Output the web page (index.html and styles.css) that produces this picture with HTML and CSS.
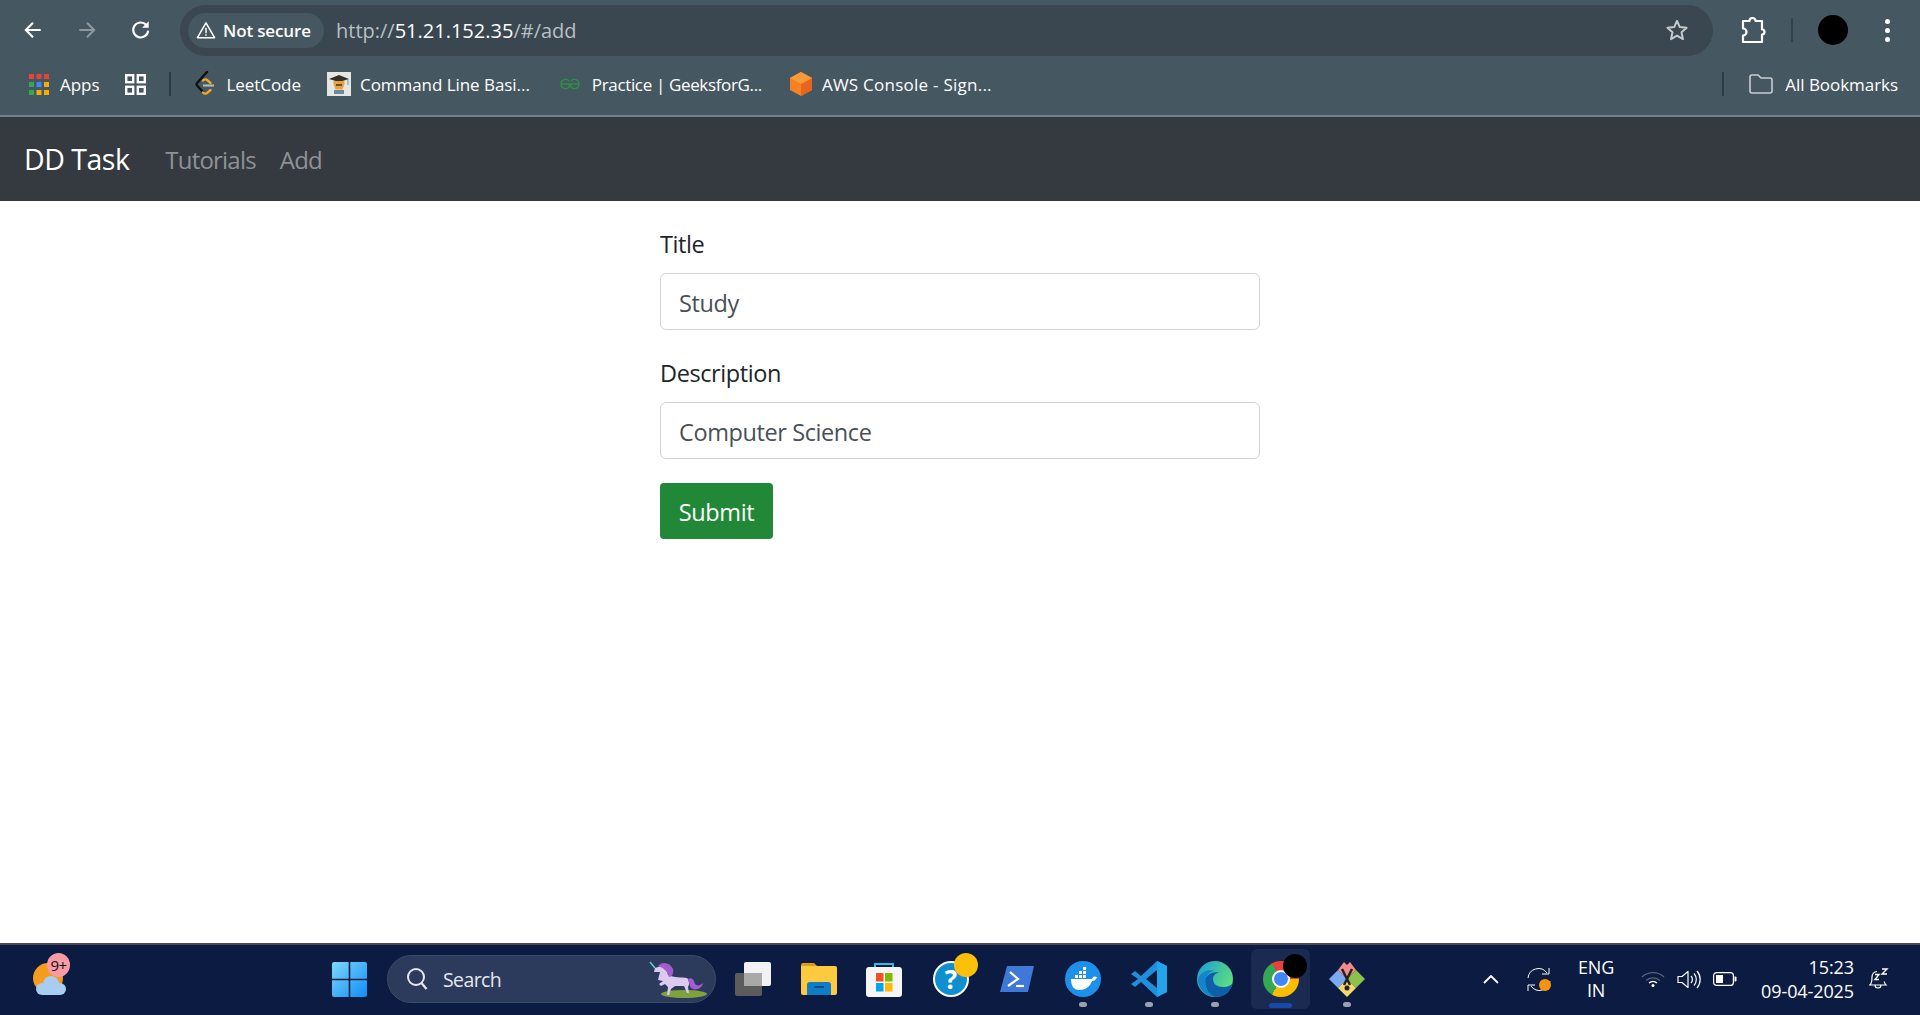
FILE: index.html
```html
<!DOCTYPE html>
<html lang="en">
<head>
    <meta charset="UTF-8">
    <title>DD Task</title>
    <link rel="stylesheet" href="styles.css">
</head>
<body>
    <div class="toolbar">
        <svg class="tool-icon back" viewBox="0 0 20 20"><path d="M17 10H4M10 3.5 3.5 10l6.5 6.5" fill="none" stroke="#fff" stroke-width="1.9"/></svg>
        <svg class="tool-icon forward" viewBox="0 0 20 20"><path d="M3 10h13M10 3.5l6.5 6.5-6.5 6.5" fill="none" stroke="#8d999f" stroke-width="1.9"/></svg>
        <svg class="tool-icon reload" viewBox="0 0 20 20"><path d="M16.5 10.5a6.8 6.8 0 1 1-1.800-5.200" fill="none" stroke="#fff" stroke-width="1.900"/><path d="M17 2v6h-6z" fill="#fff"/></svg>
        <div class="omnibox">
            <div class="chip">
                <svg class="warn" viewBox="0 0 22 20"><path d="M11 2 1.500 18.500h19z" fill="none" stroke="#fff" stroke-width="1.700" stroke-linejoin="round"/><path d="M11 7.500v6M11 14.700v1.800" stroke="#fff" stroke-width="1.600"/></svg>
                <span class="chip-text">Not secure</span>
            </div>
            <div class="url"><span class="url-dim">http://</span>51.21.152.35<span class="url-dim">/#/add</span></div>
            <svg class="star" viewBox="0 0 24 24"><path d="m12 2.800 2.800 6.300 6.800.7-5.100 4.500 1.500 6.800-6-3.500-6 3.500 1.500-6.800-5.100-4.500 6.800-.7z" fill="none" stroke="#c3c9cc" stroke-width="2" stroke-linejoin="round"/></svg>
        </div>
        <svg class="ext" viewBox="0 0 26 30"><path d="M3 6h6.500a3 3 0 0 1 6 0H22v8.500a2.500 2.500 0 0 1 0 5V27H3v-6.500a3.500 3.500 0 0 0 0-7z" fill="none" stroke="#fff" stroke-width="2.200" stroke-linejoin="round"/></svg>
        <div class="tool-sep"></div>
        <div class="avatar"></div>
        <div class="dots"><i></i><i></i><i></i></div>
    </div>

    <div class="bookmarks">
        <svg class="bm-apps" viewBox="0 0 20 21">
            <g fill="#ea4335"><rect width="5" height="5"/><rect x="7.500" width="5" height="5"/><rect x="15" width="5" height="5"/></g>
            <rect y="8" width="5" height="5" fill="#34a853"/><rect x="7.500" y="8" width="5" height="5" fill="#4285f4"/><rect x="15" y="8" width="5" height="5" fill="#f9ab00"/>
            <rect y="16" width="5" height="5" fill="#34a853"/><rect x="7.500" y="16" width="5" height="5" fill="#f9ab00"/><rect x="15" y="16" width="5" height="5" fill="#f9ab00"/>
        </svg>
        <span class="bm-text apps-label">Apps</span>
        <svg class="bm-grid" viewBox="0 0 21 21"><g fill="none" stroke="#fff" stroke-width="2.400"><rect x="1.200" y="1.200" width="7" height="7"/><rect x="12.800" y="1.200" width="7" height="7"/><rect x="1.200" y="12.800" width="7" height="7"/><rect x="12.800" y="12.800" width="7" height="7"/></g></svg>
        <div class="bm-sep first-sep"></div>
        <svg class="bm-leet" viewBox="0 0 20 26"><path d="M12 1 2.500 11.500a2.500 2.500 0 0 0 0 3.500L8 21" fill="none" stroke="#111" stroke-width="2.400" stroke-linecap="round"/><path d="M8 21.500a3 3 0 0 0 4.500.2l3-2.700M8 9.500a3 3 0 0 1 4.500-.2l3 2.700" fill="none" stroke="#f5a623" stroke-width="2.400" stroke-linecap="round"/><path d="M8 14.500h11" stroke="#b3b8ba" stroke-width="2.200"/></svg>
        <span class="bm-text leet-label">LeetCode</span>
        <svg class="bm-cmd" viewBox="0 0 24 24"><rect width="24" height="24" fill="#e6e6e3"/><path d="M2 7l10-4 10 4-10 3z" fill="#33302c"/><path d="M6.500 9h11v3l-2 5.500h-7l-2-5.500z" fill="#e8a33c"/><path d="M9 12h6v2H9z" fill="#7a4e1c"/><path d="M7 18h10v4H7z" fill="#6d8ba0"/><path d="M21 7v6" stroke="#4a9dbd"/></svg>
        <span class="bm-text cmd-label">Command Line Basi...</span>
        <svg class="bm-gfg" viewBox="0 0 22 12"><path d="M1.500 6h19M2 6a4.500 4.500 0 0 1 8-3M2 6a4.500 4.500 0 0 0 8 3l.5-3M20 6a4.500 4.500 0 0 0-8-3M20 6a4.500 4.500 0 0 1-8 3l-.5-3" fill="none" stroke="#2f8d46" stroke-width="1.400"/></svg>
        <span class="bm-text gfg-label">Practice | GeeksforG...</span>
        <svg class="bm-aws" viewBox="0 0 22 24"><path d="M11 0l11 6v12l-11 6L0 18V6z" fill="#f58220"/><path d="M11 12l11-6v12l-11 6z" fill="#e8631c"/><path d="M11 0l11 6-11 6L0 6z" fill="#f9993b"/></svg>
        <span class="bm-text aws-label">AWS Console - Sign...</span>
        <div class="bm-spacer"></div>
        <div class="bm-sep"></div>
        <svg class="bm-folder" viewBox="0 0 24 20"><path d="M1 3a2 2 0 0 1 2-2h6l3 3h9a2 2 0 0 1 2 2v11a2 2 0 0 1-2 2H3a2 2 0 0 1-2-2z" fill="none" stroke="#c9ced1" stroke-width="1.600"/></svg>
        <span class="bm-text all-label">All Bookmarks</span>
    </div>

    <nav class="navbar">
        <span class="brand">DD Task</span>
        <a class="nav-link">Tutorials</a>
        <a class="nav-link">Add</a>
    </nav>

    <main class="page">
        <form class="task-form">
            <div class="form-group">
                <label class="form-label">Title</label>
                <div class="form-control">Study</div>
            </div>
            <div class="form-group">
                <label class="form-label">Description</label>
                <div class="form-control">Computer Science</div>
            </div>
            <div class="btn-submit">Submit</div>
        </form>
    </main>

    <footer class="taskbar">
        <div class="widget">
            <svg class="weather" viewBox="0 0 33 32">
                <ellipse cx="15" cy="15" rx="15" ry="15" fill="#f39c1f"/>
                <g fill="#a8cdf0"><circle cx="9" cy="26" r="6"/><circle cx="27" cy="26" r="6"/><circle cx="18" cy="21" r="8"/><rect x="9" y="22" width="18" height="10"/></g>
            </svg>
            <span class="badge">9+</span>
        </div>

        <div class="tb-center">
            <svg class="win-logo" viewBox="0 0 35 35">
                <defs><linearGradient id="wing" x1="0" y1="0" x2="1" y2="1"><stop offset="0" stop-color="#7fd8fb"/><stop offset="1" stop-color="#0f8cf5"/></linearGradient></defs>
                <path d="M0 2a2 2 0 0 1 2-2h14.700v16.700H0zM18.300 0H33a2 2 0 0 1 2 2v14.700H18.300zM0 18.300h16.700V35H2a2 2 0 0 1-2-2zM18.300 18.300H35V33a2 2 0 0 1-2 2H18.300z" fill="url(#wing)"/>
            </svg>
            <div class="search-pill">
                <svg class="search-icon" viewBox="0 0 22 24"><circle cx="10" cy="10" r="8" fill="none" stroke="#e4e7ee" stroke-width="2"/><path d="m15.500 16 5 6" stroke="#e4e7ee" stroke-width="2.200"/></svg>
                <span class="search-text">Search</span>
                <svg class="unicorn" viewBox="0 0 61 37">
                    <ellipse cx="38" cy="33" rx="23" ry="4" fill="#7fa23c"/>
                    <path d="M4 1l5 6" stroke="#5fd0d8" stroke-width="1.500"/>
                    <path d="M12 19l2-8-6 0 1-4 6-2c6 0 6 5 7 9 6 3 14 2 19 3 2 2 3 6 1 9l1 6h-2l-3-7-9 0-4 3-2 6h-2l1-8-3-3-4 2-2-2 4-3z" fill="#dcc9ee"/>
                    <path d="M12 5c4-5 12-4 15 3 1 4-1 8-4 8-1-5-5-9-11-11zM42 18c4-2 6 1 7 5 2 2 5 2 8-1-1 6-8 8-12 5-2-3-2-6-3-9z" fill="#a35cd0"/>
                </svg>
            </div>
            <svg class="taskview" viewBox="0 0 36 34">
                <rect y="11" width="27" height="23" rx="2" fill="#5c5c5c"/>
                <rect x="9" width="27" height="24" rx="2" fill="#f2f2f2"/>
                <rect x="9" y="11" width="18" height="13" fill="#a9a9a9"/>
            </svg>
            <svg class="explorer" viewBox="0 0 36 32">
                <path d="M0 2a2 2 0 0 1 2-2h11l3 3H0z" fill="#d69f16"/>
                <path d="M0 3h34a2 2 0 0 1 2 2v25a2 2 0 0 1-2 2H2a2 2 0 0 1-2-2z" fill="#fdc93f"/>
                <path d="M6 32V22a3 3 0 0 1 3-3h18a3 3 0 0 1 3 3v10z" fill="#0f7cc6"/>
                <path d="M13 24h10" stroke="#0a4f8a" stroke-width="2"/>
            </svg>
            <svg class="store" viewBox="0 0 36 35">
                <path d="M9 8V2h18v6" fill="none" stroke="#35b6e8" stroke-width="2"/>
                <rect y="5" width="36" height="30" rx="3" fill="#f5f5f5"/>
                <rect x="10" y="11" width="7.500" height="8.500" fill="#f25022"/><rect x="19" y="11" width="7.500" height="8.500" fill="#7fba00"/>
                <rect x="10" y="21" width="7.500" height="8.500" fill="#00a4ef"/><rect x="19" y="21" width="7.500" height="8.500" fill="#ffb900"/>
            </svg>
            <div class="help-app">
                <span class="help-circle">?</span>
                <span class="help-dot"></span>
            </div>
            <svg class="powershell" viewBox="0 0 34 26">
                <path d="M7 0h27l-6 26H0z" fill="#3f78d6"/>
                <path d="m10 6 8 7-10 7" fill="none" stroke="#fff" stroke-width="2.200"/>
                <path d="M16 20h8" stroke="#fff" stroke-width="2.200"/>
            </svg>
            <div class="pinned first-pinned">
                <svg class="app-36" viewBox="0 0 36 36">
                    <circle cx="18" cy="18" r="18" fill="#1d91ea"/>
                    <path d="M6 18h21c1-3 3-3 5-2-1 3-3 4-5 4-2 6-7 9-13 9-5 0-8-4-8-11z" fill="#fff"/>
                    <g fill="#fff"><rect x="10" y="14" width="3" height="3"/><rect x="14" y="14" width="3" height="3"/><rect x="18" y="14" width="3" height="3"/><rect x="14" y="10" width="3" height="3"/><rect x="18" y="10" width="3" height="3"/><rect x="18" y="6" width="3" height="3"/></g>
                </svg>
                <span class="run-dot"></span>
            </div>
            <div class="pinned">
                <svg class="app-36" viewBox="0 0 36 36">
                    <path d="M26 0l10 5v26l-10 5-16-15-6 5-4-3 7-5-7-5 4-3 6 5z" fill="#1f8fdc"/>
                    <path d="M26 9v18l-11-9z" fill="#0c1b41"/>
                    <path d="M26 0l10 5v26l-10 5V27V9z" fill="#23a3ea"/>
                </svg>
                <span class="run-dot"></span>
            </div>
            <div class="pinned">
                <svg class="app-36" viewBox="0 0 36 36">
                    <defs><linearGradient id="edgeg" x1="0" y1="0" x2="1" y2="0.600"><stop offset="0" stop-color="#1a9bd8"/><stop offset="1" stop-color="#5fe07a"/></linearGradient></defs>
                    <circle cx="18" cy="18" r="18" fill="url(#edgeg)"/>
                    <path d="M36 20c0 4-5 6-10 6-6 0-10-3-10-8 0-4 4-7 8-6-8-3-17 2-17 11 0 7 6 13 13 13 9 0 15-7 16-16z" fill="#0e5fa8"/>
                    <path d="M18 36C9 36 1 28 1 18 4 10 12 8 18 10c-6 0-11 6-9 14 1 6 5 10 9 12z" fill="#1484cc"/>
                </svg>
                <span class="run-dot"></span>
            </div>
            <div class="pinned active">
                <div class="chrome-logo"><span class="chrome-eye"></span></div>
                <span class="chrome-blot"></span>
                <span class="active-bar"></span>
            </div>
            <div class="pinned">
                <svg class="app-36" viewBox="0 0 36 36">
                    <path d="M18 18 9 9 0 18l9 9z" fill="#7aa9f5"/>
                    <path d="M18 18l9-9 9 9-9 9z" fill="#8bc34a"/>
                    <path d="M18 18l9 9-9 9-9-9z" fill="#f5d76e"/>
                    <path d="M18 18 9 9l6-8 3 3 3-3 6 8z" fill="#f28b8b"/>
                    <path d="M13 8l8 16M23 8l-8 16" stroke="#222" stroke-width="2.500"/>
                    <circle cx="18" cy="27" r="2.500" fill="#222"/>
                </svg>
                <span class="run-dot"></span>
            </div>
        </div>

        <div class="tray">
            <svg class="tray-chevron" viewBox="0 0 16 9"><path d="M1 8l7-7 7 7" fill="none" stroke="#fff" stroke-width="1.800"/></svg>
            <svg class="tray-sync" viewBox="0 0 24 25">
                <path d="M1 11A10.500 10.500 0 0 1 20 6M23 14a10.500 10.500 0 0 1-19 5" fill="none" stroke="#fff" stroke-width="1"/>
                <path d="M15 7h7V1M1 18h7M1 18v6" fill="none" stroke="#fff" stroke-width="1"/>
                <circle cx="18" cy="18" r="6" fill="#f7940f"/>
            </svg>
            <div class="lang"><span>ENG</span><span>IN</span></div>
            <svg class="tray-wifi" viewBox="0 0 24 16">
                <path d="M1 6a16 16 0 0 1 22 0M5 9.500a10.500 10.500 0 0 1 14 0" fill="none" stroke="#59647d" stroke-width="1.300"/>
                <path d="M8 12a6 6 0 0 1 8 0" fill="none" stroke="#fff" stroke-width="1.500"/>
                <circle cx="12" cy="14.500" r="1.500" fill="#fff"/>
            </svg>
            <svg class="tray-sound" viewBox="0 0 24 19">
                <path d="M1 6.500h4L11 1.500v16l-6-5H1z" fill="none" stroke="#fff" stroke-width="1.200" stroke-linejoin="round"/>
                <path d="M14 6a5 5 0 0 1 0 7M17 3.500a9 9 0 0 1 0 12M20 1a13 13 0 0 1 0 17" fill="none" stroke="#fff" stroke-width="1.200"/>
            </svg>
            <svg class="tray-battery" viewBox="0 0 24 14">
                <rect x=".6" y=".6" width="19.800" height="12.800" rx="3" fill="none" stroke="#fff" stroke-width="1.200"/>
                <rect x="3" y="3" width="7" height="8" fill="#fff"/>
                <path d="M21.500 4.500h1a1 1 0 0 1 1 1v3a1 1 0 0 1-1 1h-1z" fill="#fff"/>
            </svg>
            <div class="clock"><span>15:23</span><span>09-04-2025</span></div>
            <div class="bell-wrap">
                <svg class="tray-bell" viewBox="0 0 21 22">
                    <path d="M2 17c2-2 2-4 2-8a5.500 5.500 0 0 1 5-5.500M1 17h17c-1-1-1.500-2-1.800-3.500M7 17a3 3 0 0 0 6 0" fill="none" stroke="#fff" stroke-width="1.200"/>
                    <path d="M7 6.500h4l-4 5h4M14 1h5l-5 5h5" fill="none" stroke="#fff" stroke-width="1.400"/>
                </svg>
            </div>
        </div>
    </footer>
</body>
</html>
```

FILE: styles.css
```css
* {
    box-sizing: border-box;
}

html, body {
    margin: 0;
    height: 100%;
}

body {
    display: flex;
    flex-direction: column;
    height: 1015px;
    overflow: hidden;
    background-color: #fff;
    font-family: "Open Sans", "Noto Sans", sans-serif;
}

svg {
    display: block;
    flex: none;
}

/* browser toolbar */
.toolbar {
    display: flex;
    align-items: center;
    height: 58px;
    padding-top: 2px;
    background-color: #455761;
}

.tool-icon {
    width: 22px;
    height: 22px;
}
.back { margin-left: 22px; }
.forward { margin-left: 32px; }
.reload { margin-left: 32px; }

.omnibox {
    display: flex;
    align-items: center;
    width: 1533px;
    height: 51px;
    margin-left: 28px;
    padding-left: 8px;
    border-radius: 26px;
    background-color: #3a4750;
}

.chip {
    display: flex;
    align-items: center;
    width: 136px;
    height: 35px;
    padding-left: 8px;
    border-radius: 18px;
    background-color: #455761;
}

.warn {
    width: 20px;
    height: 18px;
}

.chip-text {
    margin-left: 7px;
    color: #fff;
    font-size: 17px;
    font-weight: 600;
    letter-spacing: -0.15px;
    white-space: nowrap;
}

.url {
    margin-left: 12px;
    color: #fff;
    font-size: 20px;
    white-space: nowrap;
}
.url-dim { color: #b7bfc3; }

.star {
    width: 24px;
    height: 24px;
    margin-left: auto;
    margin-right: 24px;
}

.ext {
    width: 26px;
    height: 30px;
    margin-left: 27px;
}

.tool-sep {
    width: 2px;
    height: 24px;
    margin-left: 25px;
    background-color: #37424a;
}

.avatar {
    width: 30px;
    height: 30px;
    margin-left: 25px;
    border-radius: 50%;
    background-color: #000;
}

.dots {
    display: flex;
    flex-direction: column;
    gap: 4px;
    margin-left: 37px;
}
.dots i {
    width: 5px;
    height: 5px;
    border-radius: 50%;
    background-color: #fff;
}

/* bookmarks bar */
.bookmarks {
    display: flex;
    align-items: center;
    height: 59px;
    padding-bottom: 5px;
    padding-right: 22px;
    border-bottom: 2px solid #6f828b;
    background-color: #455761;
}

.bm-text {
    color: #fff;
    font-size: 17px;
    letter-spacing: -0.05px;
    white-space: nowrap;
}

.bm-apps { width: 20px; height: 21px; margin-left: 29px; }
.apps-label { margin-left: 11px; }
.bm-grid { width: 21px; height: 21px; margin-left: 26px; }
.bm-sep { width: 2px; height: 24px; background-color: #2e3a41; }
.first-sep { margin-left: 23px; }
.bm-leet { width: 20px; height: 26px; margin-left: 24px; }
.leet-label { margin-left: 11px; }
.bm-cmd { width: 24px; height: 24px; margin-left: 26px; }
.cmd-label { margin-left: 9px; }
.bm-gfg { width: 22px; height: 12px; margin-left: 29px; }
.gfg-label { margin-left: 11px; letter-spacing: -0.35px; }
.bm-aws { width: 22px; height: 24px; margin-left: 28px; }
.aws-label { margin-left: 10px; letter-spacing: 0.25px; }
.bm-spacer { flex: 1; }
.bm-folder { width: 24px; height: 20px; margin-left: 25px; }
.all-label { margin-left: 12px; }

/* app navbar */
.navbar {
    display: flex;
    align-items: center;
    flex: none;
    height: 84px;
    padding: 0 24px;
    background-color: #343a40;
}

.brand {
    margin-right: 36px;
    color: #fff;
    font-size: 28.500px;
    letter-spacing: -0.5px;
}

.nav-link {
    margin-right: 24px;
    color: #8f9295;
    font-size: 24px;
    letter-spacing: -0.8px;
}

/* form */
.page {
    flex: 1;
    padding-top: 24px;
}

.task-form {
    width: 600px;
    margin: 0 auto;
}

.form-group {
    margin-bottom: 24px;
}

.form-label {
    display: block;
    margin-bottom: 12px;
    padding-top: 1px;
    height: 36px;
    color: #212529;
    font-size: 23.500px;
    line-height: 36px;
    letter-spacing: -0.4px;
}

.form-control {
    height: 57px;
    padding: 11px 18px 0;
    border: 1.500px solid #ced4da;
    border-radius: 6px;
    color: #495057;
    font-size: 23.500px;
    line-height: 36px;
    letter-spacing: -0.4px;
}

.btn-submit {
    width: 113px;
    height: 56px;
    border-radius: 4px;
    background-color: #218838;
    color: #fff;
    font-size: 23.500px;
    line-height: 58px;
    text-align: center;
    letter-spacing: -0.4px;
}

/* windows taskbar */
.taskbar {
    display: flex;
    align-items: center;
    flex: none;
    height: 72px;
    padding-bottom: 2px;
    border-top: 2px solid #474a52;
    background-color: #0c1b41;
}

.widget {
    position: relative;
    width: 33px;
    height: 32px;
    margin-left: 33px;
}

.weather {
    width: 33px;
    height: 32px;
}

.badge {
    position: absolute;
    top: -10px;
    left: 14px;
    width: 23px;
    height: 24px;
    border-radius: 50%;
    background-color: #f99ba4;
    color: #111;
    font-size: 15px;
    line-height: 24px;
    text-align: center;
    letter-spacing: -0.5px;
}

.tb-center {
    display: flex;
    align-items: center;
    margin-left: 266px;
}

.win-logo {
    width: 35px;
    height: 35px;
}

.search-pill {
    display: flex;
    align-items: center;
    width: 329px;
    height: 48px;
    margin-left: 20px;
    padding-left: 18px;
    border: 1px solid #3c4a6b;
    border-radius: 24px;
    background-color: #2c3a5c;
}

.search-icon {
    width: 22px;
    height: 24px;
}

.search-text {
    margin-left: 15px;
    color: #e4e7ee;
    font-size: 19.500px;
    letter-spacing: -0.6px;
}

.unicorn {
    width: 61px;
    height: 37px;
    margin-left: auto;
    margin-right: 8px;
}

.taskview { width: 36px; height: 34px; margin-left: 19px; }
.explorer { width: 36px; height: 32px; margin-left: 30px; }
.store { width: 36px; height: 35px; margin-left: 29px; }

.help-app {
    position: relative;
    width: 36px;
    height: 36px;
    margin-left: 31px;
}

.help-circle {
    display: block;
    width: 36px;
    height: 36px;
    border: 2px solid #fff;
    border-radius: 50%;
    background-color: #0f8fcf;
    color: #fff;
    font-size: 26px;
    font-weight: 700;
    line-height: 32px;
    text-align: center;
}

.help-dot {
    position: absolute;
    top: -8px;
    left: 21px;
    width: 24px;
    height: 24px;
    border-radius: 50%;
    background-color: #fcc00a;
}

.powershell { width: 34px; height: 26px; margin-left: 31px; }

.pinned {
    position: relative;
    width: 36px;
    height: 36px;
    margin-left: 30px;
}
.first-pinned { margin-left: 31px; }

.run-dot {
    position: absolute;
    top: 41px;
    left: 14px;
    width: 8px;
    height: 5px;
    border-radius: 3px;
    background-color: #9aa1ae;
}

.app-36 {
    width: 36px;
    height: 36px;
}

.active::before {
    content: "";
    position: absolute;
    top: -12px;
    left: -12px;
    width: 59px;
    height: 60px;
    border-radius: 6px;
    background-color: #1a2a50;
}

.chrome-logo {
    position: relative;
    width: 36px;
    height: 36px;
    border-radius: 50%;
    background: conic-gradient(from 330deg, #ea4335 0 120deg, #fbbc04 120deg 240deg, #34a853 240deg 360deg);
}

.chrome-eye {
    position: absolute;
    top: 9px;
    left: 9px;
    width: 18px;
    height: 18px;
    border: 2.500px solid #fff;
    border-radius: 50%;
    background-color: #4285f4;
}

.chrome-blot {
    position: absolute;
    top: -7px;
    left: 20px;
    width: 24px;
    height: 24px;
    border-radius: 50%;
    background-color: #000;
}

.active-bar {
    position: absolute;
    top: 42px;
    left: 6px;
    width: 23px;
    height: 5px;
    border-radius: 3px;
    background-color: #1a49ad;
}

.tray {
    display: flex;
    align-items: center;
    margin-left: auto;
}

.tray-chevron { width: 16px; height: 9px; }
.tray-sync { width: 24px; height: 25px; margin-left: 28px; }

.lang {
    display: flex;
    flex-direction: column;
    align-items: center;
    width: 36px;
    margin-left: 27px;
    color: #fff;
    font-size: 18px;
    line-height: 23px;
    letter-spacing: -0.2px;
}

.tray-wifi { width: 24px; height: 16px; margin-left: 27px; }
.tray-sound { width: 24px; height: 19px; margin-left: 12px; }
.tray-battery { width: 24px; height: 14px; margin-left: 12px; }

.clock {
    display: flex;
    flex-direction: column;
    align-items: flex-end;
    width: 100px;
    margin-left: 17px;
    color: #fff;
    font-size: 18px;
    line-height: 24px;
    letter-spacing: -0.1px;
}

.bell-wrap {
    margin-left: 14px;
    margin-right: 31px;
}

.tray-bell { width: 21px; height: 22px; }
```
